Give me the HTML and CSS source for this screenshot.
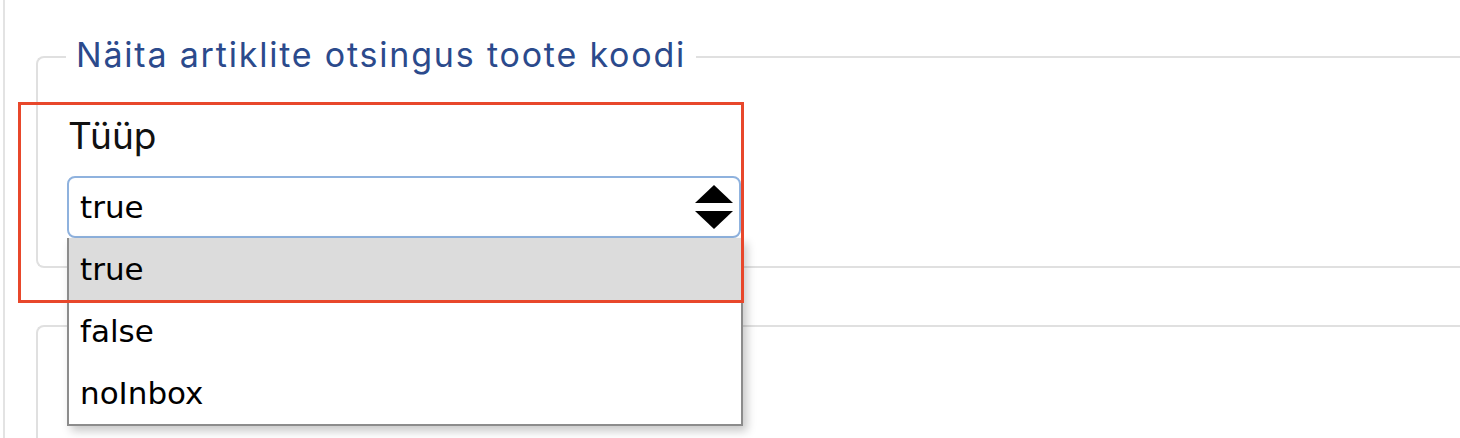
FILE: index.html
```html
<!DOCTYPE html>
<html lang="et">
<head>
<meta charset="utf-8">
<title>Tüüp</title>
<link rel="stylesheet" href="styles.css">
</head>
<body>
<div class="page">
  <fieldset class="group first">
    <legend class="group-title">Näita artiklite otsingus toote koodi</legend>
    <div class="field">
      <div class="field-label">Tüüp</div>
      <div class="select">
        <span class="select-value">true</span>
        <svg class="select-arrows" width="38" height="44" viewBox="0 0 38 44" aria-hidden="true">
          <polygon points="19,0 38,18 0,18" fill="#000"/>
          <polygon points="0,26 38,26 19,44" fill="#000"/>
        </svg>
        <ul class="options">
          <li class="option selected">true</li>
          <li class="option">false</li>
          <li class="option">noInbox</li>
        </ul>
      </div>
    </div>
  </fieldset>
  <fieldset class="group second"></fieldset>
  <div class="highlight"></div>
</div>
</body>
</html>
```
FILE: styles.css
```css
html, body {
  margin: 0;
  padding: 0;
  background: #fff;
}
body {
  width: 1460px;
  height: 438px;
  overflow: hidden;
}
.page {
  position: relative;
  margin-left: 3px;
  border-left: 2px solid #e3e3e3;
  height: 438px;
  padding: 31px 0 0 31px;
  box-sizing: border-box;
  overflow: hidden;
}
.group {
  margin: 0 -40px 0 0;
  border: 2px solid #e0e0e0;
  border-right: none;
  border-radius: 8px 0 0 8px;
  padding: 0 0 28px 30px;
  min-width: 0;
}
.group-title {
  padding: 0 10px 4px 10px;
  margin: 0 0 0 -2px;
  font-family: Inter, Lato, sans-serif;
  font-size: 34px;
  line-height: 48px;
  letter-spacing: 1.8px;
  color: #2b4a8c;
}
.field {
  display: flex;
  flex-direction: column;
  align-items: flex-start;
  gap: 18px;
}
.field-label {
  font-family: Inter, Lato, sans-serif;
  font-size: 37px;
  line-height: 44px;
  color: #111;
  margin-top: 31px;
}
.select {
  position: relative;
  width: 674px;
  height: 62px;
  box-sizing: border-box;
  border: 2px solid #8fb2de;
  border-radius: 8px;
  margin-left: -1px;
  display: flex;
  align-items: center;
  justify-content: space-between;
  padding: 0 6px 0 11px;
}
.select-value,
.option {
  font-family: "DejaVu Sans", Verdana, sans-serif;
  font-size: 31px;
  color: #000;
}
.select-arrows {
  display: block;
}
.options {
  position: absolute;
  left: -2px;
  top: 60px;
  width: 676px;
  margin: 0;
  padding: 0;
  list-style: none;
  box-sizing: border-box;
  border: 2px solid #8c8c8c;
  border-top: none;
  background: #fff;
  box-shadow: 4px 5px 9px rgba(0, 0, 0, 0.22);
  z-index: 2;
}
.option {
  height: 62px;
  line-height: 62px;
  padding-left: 11px;
}
.option.selected {
  background: #dcdcdc;
}
.second {
  margin-top: 57px;
  height: 200px;
  padding: 0;
}
.highlight {
  position: absolute;
  left: 13px;
  top: 102px;
  width: 726px;
  height: 201px;
  box-sizing: border-box;
  border: 3px solid #e8472b;
  z-index: 3;
  pointer-events: none;
}
```
